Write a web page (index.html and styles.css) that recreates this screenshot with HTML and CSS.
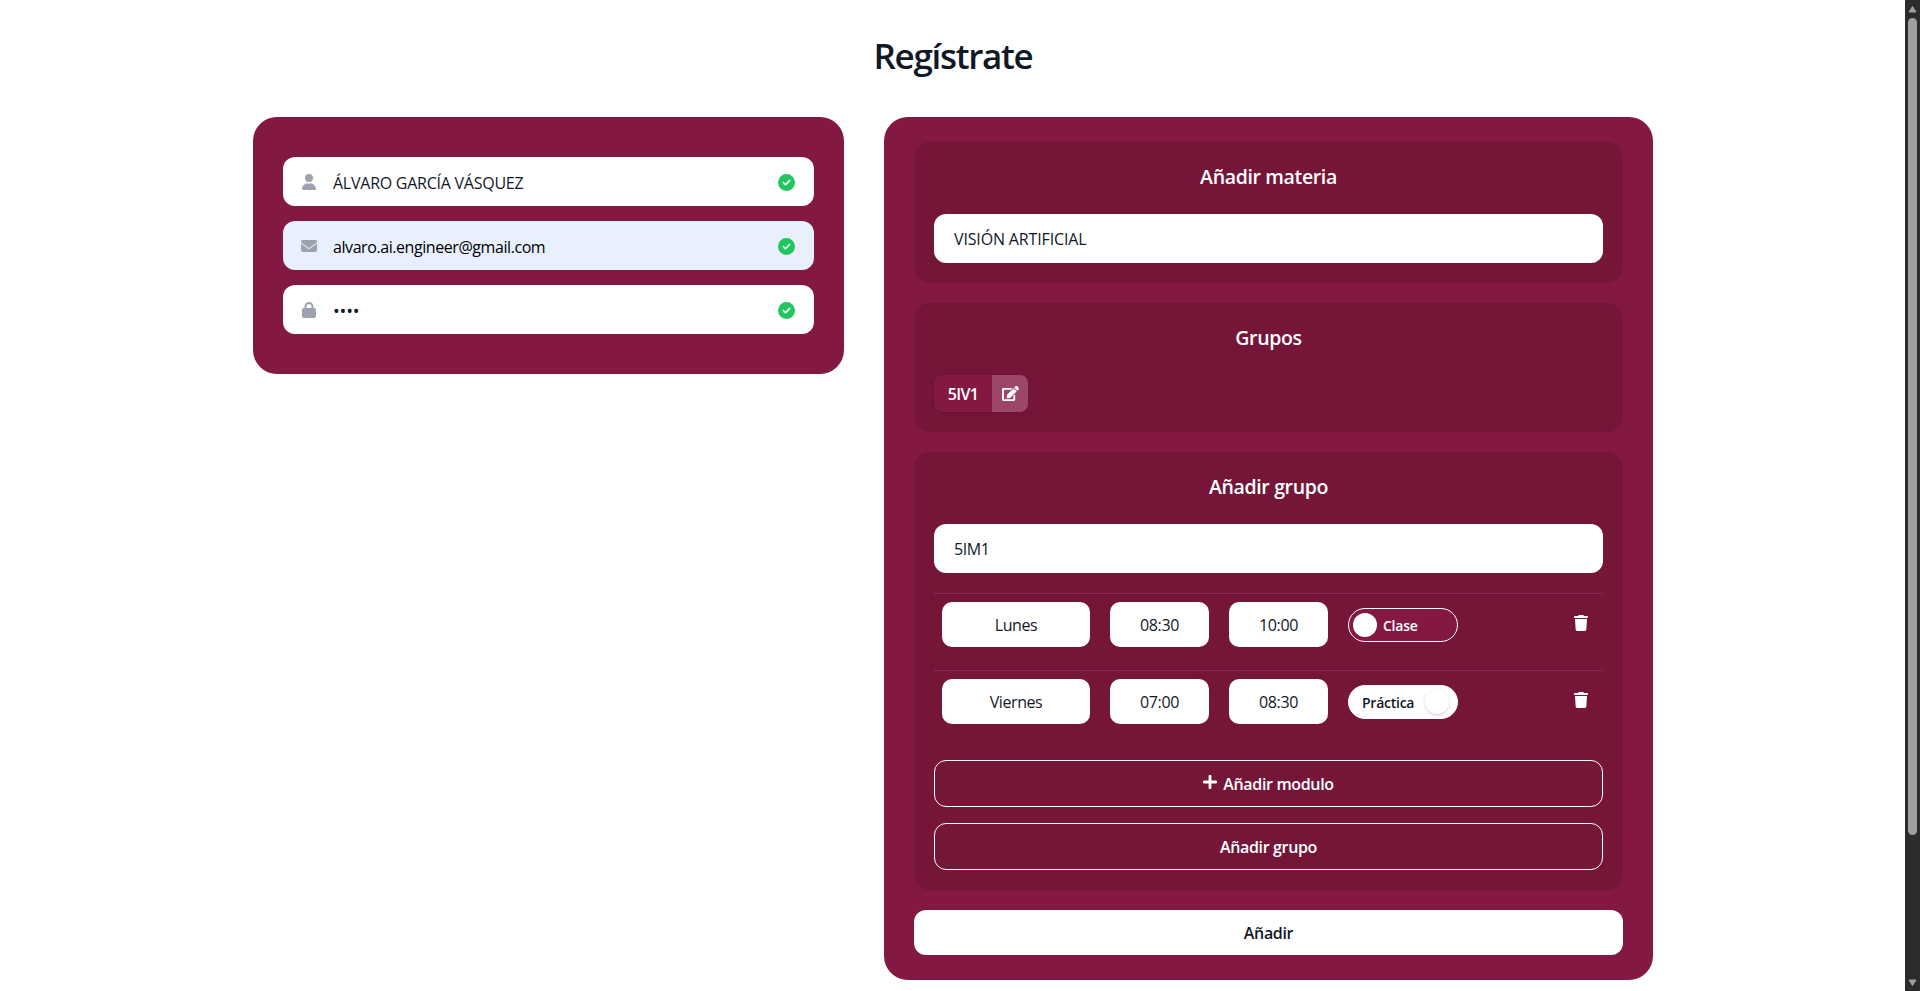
FILE: index.html
```html
<!DOCTYPE html>
<html lang="es">
<head>
<meta charset="utf-8">
<title>Regístrate</title>
<link rel="stylesheet" href="styles.css">
</head>
<body>
<svg class="sprite" aria-hidden="true">
  <symbol id="check" viewBox="0 0 512 512"><path d="M256 512A256 256 0 1 0 256 0a256 256 0 1 0 0 512zM369 209L241 337c-9.400 9.400-24.600 9.400-33.900 0l-64-64c-9.400-9.400-9.400-24.600 0-33.900s24.600-9.400 33.900 0l47 47L335 175c9.400-9.400 24.600-9.400 33.900 0s9.400 24.600 0 33.900z"/></symbol>
  <symbol id="trash" viewBox="0 0 448 512"><path d="M135.200 17.700L128 32H32C14.300 32 0 46.300 0 64S14.300 96 32 96H416c17.700 0 32-14.300 32-32s-14.300-32-32-32H320l-7.200-14.300C307.400 6.800 296.300 0 284.200 0H163.800c-12.100 0-23.200 6.800-28.600 17.700zM416 128H32L53.200 467c1.600 25.300 22.600 45 47.900 45H346.900c25.300 0 46.300-19.700 47.900-45L416 128z"/></symbol>
</svg>
<div class="page">
  <main class="main">
    <h1 class="title">Regístrate</h1>
    <div class="columns">
      <section class="card account">
        <div class="field">
          <svg class="field-icon" viewBox="0 0 448 512"><path d="M224 256A128 128 0 1 0 224 0a128 128 0 1 0 0 256zm-45.700 48C79.800 304 0 383.800 0 482.300C0 498.700 13.300 512 29.700 512H418.300c16.400 0 29.700-13.300 29.700-29.700C448 383.800 368.200 304 269.700 304H178.300z"/></svg>
          <span class="value">ÁLVARO GARCÍA VÁSQUEZ</span>
          <svg class="valid"><use href="#check"/></svg>
        </div>
        <div class="field autofilled">
          <svg class="field-icon" viewBox="0 0 512 512"><path d="M48 64C21.500 64 0 85.500 0 112c0 15.100 7.100 29.300 19.200 38.400L236.800 313.600c11.400 8.500 27 8.500 38.400 0L492.800 150.400c12.100-9.100 19.200-23.300 19.200-38.400c0-26.500-21.500-48-48-48H48zM0 176V384c0 35.300 28.700 64 64 64H448c35.300 0 64-28.700 64-64V176L294.400 339.200c-22.800 17.100-54 17.100-76.800 0L0 176z"/></svg>
          <span class="value email">alvaro.ai.engineer@gmail.com</span>
          <svg class="valid"><use href="#check"/></svg>
        </div>
        <div class="field">
          <svg class="field-icon" viewBox="0 0 448 512"><path d="M144 144v48H304V144c0-44.200-35.800-80-80-80s-80 35.800-80 80zM80 192V144C80 64.500 144.500 0 224 0s144 64.500 144 144v48h16c35.300 0 64 28.700 64 64V448c0 35.300-28.700 64-64 64H64c-35.300 0-64-28.700-64-64V256c0-35.300 28.700-64 64-64H80z"/></svg>
          <span class="value password">••••</span>
          <svg class="valid"><use href="#check"/></svg>
        </div>
      </section>

      <section class="card subject">
        <div class="panel">
          <h2 class="heading">Añadir materia</h2>
          <div class="input">VISIÓN ARTIFICIAL</div>
        </div>
        <div class="panel">
          <h2 class="heading">Grupos</h2>
          <div class="chip">
            <span class="chip-name">5IV1</span>
            <span class="chip-edit"><svg viewBox="0 0 576 512"><path d="M402.600 83.200l90.200 90.200c3.800 3.800 3.800 10 0 13.800L274.400 405.600l-92.800 10.300c-12.400 1.400-22.900-9.100-21.500-21.500l10.300-92.800L388.800 83.200c3.800-3.800 10-3.800 13.800 0zm162-22.900l-48.800-48.800c-15.200-15.200-39.900-15.200-55.200 0l-35.400 35.400c-3.800 3.800-3.800 10 0 13.800l90.200 90.200c3.800 3.800 10 3.800 13.800 0l35.400-35.400c15.200-15.300 15.200-40 0-55.200zM384 346.200V448H64V128h229.800c3.200 0 6.200-1.300 8.500-3.500l40-40c7.600-7.600 2.200-20.500-8.500-20.500H48C21.500 64 0 85.500 0 112v352c0 26.500 21.500 48 48 48h352c26.500 0 48-21.500 48-48V306.200c0-10.700-12.900-16-20.500-8.500l-40 40c-2.200 2.300-3.500 5.300-3.500 8.500z"/></svg></span>
          </div>
        </div>
        <div class="panel">
          <h2 class="heading">Añadir grupo</h2>
          <div class="input group-name">5IM1</div>
          <div class="modules">
            <div class="module">
              <div class="cell day">Lunes</div>
              <div class="cell hour">08:30</div>
              <div class="cell hour">10:00</div>
              <div class="toggle"><i class="knob"></i><span>Clase</span></div>
              <svg class="trash"><use href="#trash"/></svg>
            </div>
            <div class="module">
              <div class="cell day">Viernes</div>
              <div class="cell hour">07:00</div>
              <div class="cell hour">08:30</div>
              <div class="toggle practice"><span>Práctica</span><i class="knob"></i></div>
              <svg class="trash"><use href="#trash"/></svg>
            </div>
          </div>
          <div class="actions">
            <div class="button outline"><svg class="plus" viewBox="0 0 14 14"><path d="M7 1.200v11.600M1.200 7h11.600"/></svg><span>Añadir modulo</span></div>
            <div class="button outline">Añadir grupo</div>
          </div>
        </div>
        <div class="button solid">Añadir</div>
      </section>
    </div>
  </main>
  <div class="scrollbar">
    <svg class="arrow" viewBox="0 0 9 8"><path d="M4.500 1.500L8 7H1z"/></svg>
    <div class="thumb"></div>
    <svg class="arrow" viewBox="0 0 9 8"><path d="M4.500 6.500L8 1H1z"/></svg>
  </div>
</div>
</body>
</html>
```
FILE: styles.css
```css
* { box-sizing: border-box; }
body {
  margin: 0;
  height: 991px;
  overflow: hidden;
  background: #fff;
  color: #111827;
  font-family: "Open Sans", "Noto Sans", sans-serif;
  font-size: 16px;
  line-height: 24px;
}
svg { display: block; fill: currentColor; }
.sprite { display: none; }
.page { display: flex; height: 991px; }
.main { flex: 1; padding: 0 252px 0 253px; }
.title {
  margin: 36px 0 41px;
  font-size: 35px;
  line-height: 40px;
  font-weight: 600;
  letter-spacing: -1.3px;
  text-align: center;
}
.columns {
  display: grid;
  grid-template-columns: 591px 769px;
  gap: 40px;
  align-items: start;
}
.card { background: #831843; border-radius: 24px; }
.account { display: flex; flex-direction: column; gap: 15px; padding: 40px 30px; }
.field {
  display: flex;
  align-items: center;
  height: 49px;
  padding: 1px 19px 0 18px;
  border-radius: 12px;
  background: #fff;
}
.autofilled { background: #e8f0fe; color: #000; }
.field-icon { width: 16px; height: 16px; color: #9ca3af; }
.value { flex: 1; margin-left: 16px; padding-top: 1px; letter-spacing: -.25px; }
.email { letter-spacing: -.43px; }
.password { font-size: 18px; letter-spacing: -.2px; }
.valid { width: 17px; height: 17px; color: #22c55e; }
.subject { display: flex; flex-direction: column; gap: 20px; padding: 25px 30px; }
.panel { padding: 20px; border-radius: 16px; background: #751639; color: #fff; }
.heading {
  margin: -1px 0 21px;
  font-size: 19.5px;
  line-height: 32px;
  font-weight: 600;
  letter-spacing: -.35px;
  text-align: center;
}
.input {
  display: flex;
  align-items: center;
  height: 49px;
  padding: 1px 20px 0;
  border-radius: 12px;
  background: #fff;
  color: #111827;
  letter-spacing: -.15px;
}
.group-name { letter-spacing: -.4px; }
.chip {
  display: flex;
  width: 94px;
  height: 37px;
  border-radius: 8px;
  overflow: hidden;
  background: #831843;
  font-weight: 600;
  letter-spacing: -.6px;
  box-shadow: 0 1px 3px rgba(0, 0, 0, .15);
}
.chip-name { display: flex; align-items: center; justify-content: center; width: 58px; padding-top: 1px; }
.chip-edit { display: flex; align-items: center; justify-content: center; width: 36px; background: #9c4669; }
.chip-edit svg { width: 17px; height: 15px; }
.modules { margin-top: 20px; }
.module {
  display: flex;
  align-items: flex-start;
  gap: 20px;
  height: 77px;
  padding: 8px 15px 0 8px;
  border-top: 1px solid #813050;
}
.cell {
  display: flex;
  align-items: center;
  justify-content: center;
  height: 45px;
  padding-top: 1px;
  border-radius: 10px;
  background: #fff;
  color: #111827;
  letter-spacing: -.4px;
}
.day { width: 148px; }
.hour { width: 99px; }
.toggle {
  display: flex;
  align-items: center;
  width: 110px;
  height: 34px;
  margin-top: 6px;
  padding: 0 4px;
  border: 1px solid #fff;
  border-radius: 17px;
  background: #831843;
  font-size: 14px;
  font-weight: 600;
  letter-spacing: -.25px;
}
.toggle span { padding-top: 1px; }
.knob { width: 24px; height: 24px; border-radius: 50%; background: #fff; margin-right: 6px; }
.practice { justify-content: space-between; padding: 0 8px 0 13px; background: #fff; color: #111827; }
.practice .knob { margin: 0; box-shadow: 0 1px 3px rgba(0, 0, 0, .2); }
.trash { width: 14px; height: 16px; margin: 13px 0 0 auto; }
.actions { display: grid; gap: 16px; margin-top: 13px; }
.button {
  display: flex;
  align-items: center;
  justify-content: center;
  height: 45px;
  padding-top: 1px;
  border-radius: 12px;
  font-weight: 600;
  letter-spacing: -.35px;
}
.outline { height: 47px; border: 1px solid #fff; }
.plus { width: 14px; height: 14px; margin: -5px 6px 0 0; fill: none; stroke: currentColor; stroke-width: 2.800; stroke-linecap: round; }
.solid { background: #fff; }
.scrollbar {
  display: flex;
  flex-direction: column;
  align-items: center;
  justify-content: space-between;
  width: 15px;
  padding: 5px 0 4px;
  background: #2c2c2c;
  color: #9f9f9f;
}
.arrow { width: 9px; height: 8px; stroke: currentColor; stroke-linejoin: round; }
.thumb { width: 9px; height: 817px; margin: 5px 0 auto; border-radius: 5px; background: #9f9f9f; }
```
